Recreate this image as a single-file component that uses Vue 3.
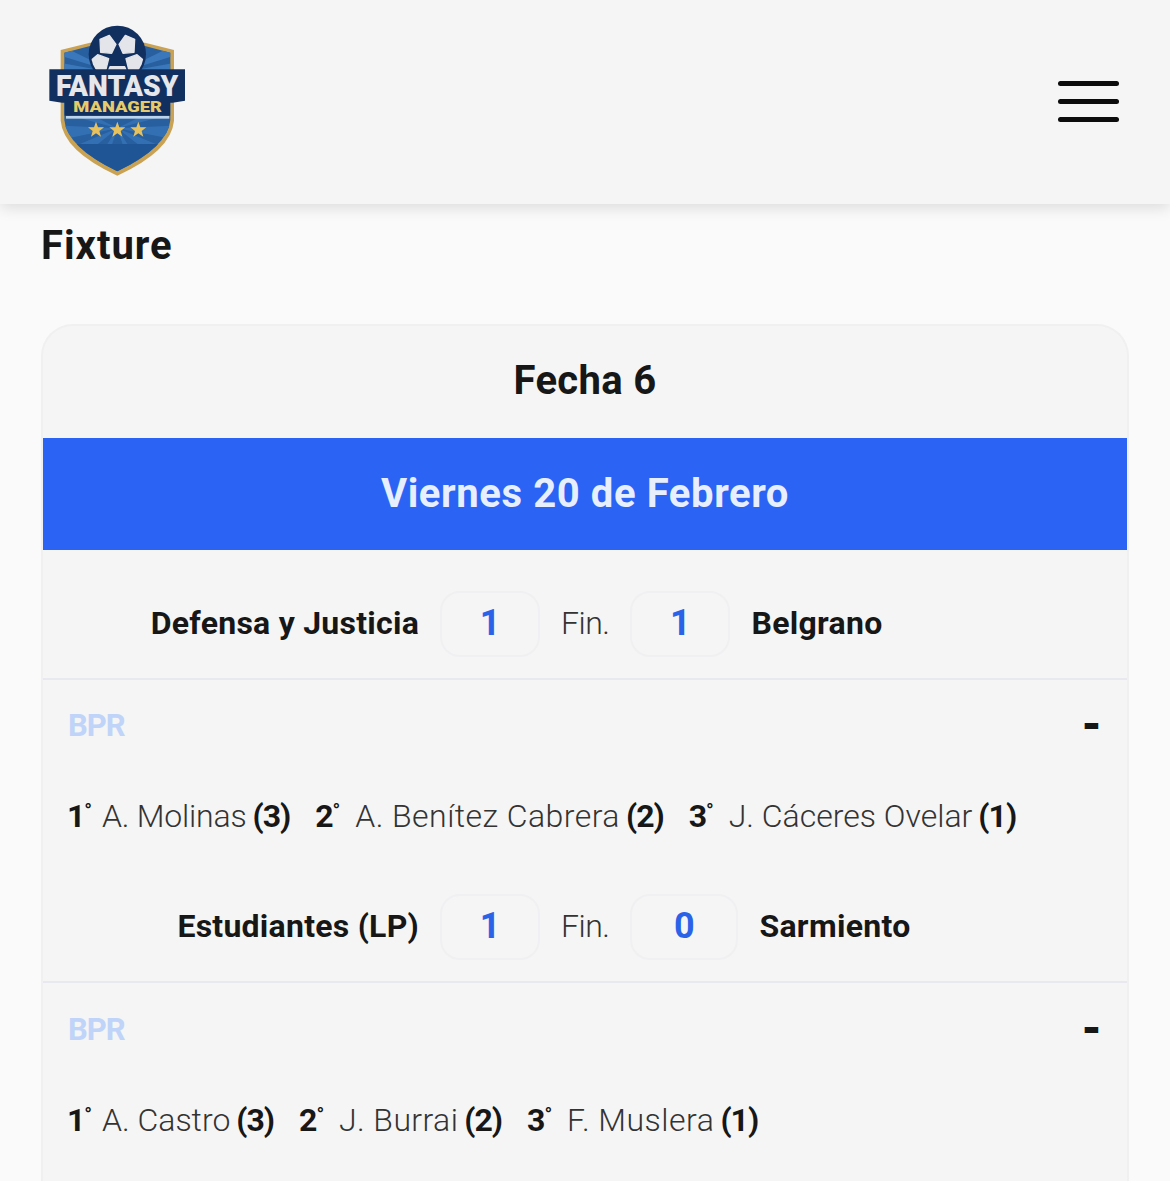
<script setup>
const matches = [
  { home: 'Defensa y Justicia', away: 'Belgrano', hs: 1, as: 1, wide: false,
    podium: [
      { pos: '1', name: 'A. Molinas', pts: 3, track: -0.2 },
      { pos: '2', name: 'A. Benítez Cabrera', pts: 2, track: 0.45 },
      { pos: '3', name: 'J. Cáceres Ovelar', pts: 1, track: 0 },
    ] },
  { home: 'Estudiantes (LP)', away: 'Sarmiento', hs: 1, as: 0, wide: true,
    podium: [
      { pos: '1', name: 'A. Castro', pts: 3, track: 0 },
      { pos: '2', name: 'J. Burrai', pts: 2, track: 0.4 },
      { pos: '3', name: 'F. Muslera', pts: 1, track: 0.5 },
    ] },
]
const rays = [
  'M262 355 L60 250 L60 300 Z', 'M262 355 L60 345 L60 395 Z', 'M262 355 L120 470 L60 440 Z',
  'M262 355 L470 250 L470 300 Z', 'M262 355 L470 345 L470 395 Z', 'M262 355 L410 470 L470 440 Z',
  'M262 355 L215 500 L170 500 Z', 'M262 355 L310 500 L355 500 Z',
]
const topRays = [
  'M262 190 L100 110 L100 140 Z', 'M262 190 L100 160 L100 190 Z',
  'M262 190 L424 110 L424 140 Z', 'M262 190 L424 160 L424 190 Z',
]
</script>

<template>
  <div class="page">
    <header class="header">
      <svg class="logo" viewBox="0 0 540 540" width="180" height="180" aria-label="Fantasy Manager">
        <defs>
          <clipPath id="shieldClip">
            <path d="M103 128 L180 108 L345 108 L421 128 L421 330 Q414 410 262 484 Q110 410 103 330 Z" />
          </clipPath>
          <clipPath id="ballClip"><circle cx="262" cy="133" r="79" /></clipPath>
        </defs>
        <path d="M92 120 L180 98 L345 98 L432 120 L432 332 Q424 422 262 497 Q100 422 92 332 Z" fill="#c9a253" />
        <path d="M103 128 L180 108 L345 108 L421 128 L421 330 Q414 410 262 484 Q110 410 103 330 Z" fill="#285f9f" />
        <g clip-path="url(#shieldClip)">
          <path v-for="d in rays" :key="d" :d="d" fill="#3370b3" />
          <path v-for="d in topRays" :key="d" :d="d" fill="#3a78bb" />
          <rect x="90" y="402" width="350" height="100" fill="#1f5595" />
          <rect x="90" y="268" width="350" height="49" fill="#12305f" />
          <rect x="108" y="318" width="310" height="8" fill="#bcd3ec" />
        </g>
        <circle cx="262" cy="133" r="86" fill="#12305f" />
        <g clip-path="url(#ballClip)" fill="#e3e5ea" stroke="#e3e5ea" stroke-width="4" stroke-linejoin="round">
          <path d="M210 88 L238 76 L258 103 L245 130 L212 127 Z" />
          <path d="M314 88 L286 76 L267 103 L279 130 L312 127 Z" />
          <path d="M203 134 L236 146 L228 178 L194 182 L181 153 Z" />
          <path d="M321 134 L288 146 L296 178 L330 182 L343 153 Z" />
          <path d="M240 170 L284 170 L296 200 L228 200 Z" />
        </g>
        <path d="M58 178 L465 178 L465 272 L428 278 L96 278 L58 272 Z" fill="#12305f" />
        <text class="logo-big" x="78" y="259" textLength="367" lengthAdjust="spacingAndGlyphs">FANTASY</text>
        <text class="logo-small" x="130" y="306" textLength="266" lengthAdjust="spacingAndGlyphs">MANAGER</text>
        <g fill="#e7c15d">
          <polygon v-for="x in [198, 262, 325]" :key="x" :transform="`translate(${x} 360)`"
            points="0,-25 6,-8 24,-8 10,3 15,20 0,10 -15,20 -10,3 -24,-8 -6,-8" />
        </g>
      </svg>
      <div class="burger" aria-label="Menú"><span></span><span></span><span></span></div>
    </header>

    <main class="main">
      <h1 class="title">Fixture</h1>
      <section class="card">
        <h2 class="round">Fecha 6</h2>
        <div class="day">Viernes 20 de Febrero</div>
        <article v-for="m in matches" :key="m.home" class="match">
          <div class="score-row">
            <span class="team home">{{ m.home }}</span>
            <span class="score">{{ m.hs }}</span>
            <span class="status">Fin.</span>
            <span class="score" :class="{ wide: m.wide }">{{ m.as }}</span>
            <span class="team">{{ m.away }}</span>
          </div>
          <div class="bpr">
            <div class="bpr-head"><span class="bpr-label">BPR</span><span class="toggle">-</span></div>
            <div class="podium">
              <span v-for="p in m.podium" :key="p.pos" class="pick">
                <b class="pos" :class="{ first: p.pos === '1' }">{{ p.pos }}<sup>°</sup></b>
                <span class="player" :style="{ letterSpacing: p.track + 'px' }">{{ p.name }}</span>
                <b class="pts">({{ p.pts }})</b>
              </span>
            </div>
          </div>
        </article>
      </section>
    </main>
  </div>
</template>

<style>
html, body { margin: 0; background: #fafafa; }
</style>

<style scoped>
.page {
  height: 1181px;
  overflow: hidden;
  background: #fafafa;
  color: #171717;
  font-family: Roboto, "Liberation Sans", sans-serif;
}
.header {
  height: 204px;
  box-sizing: border-box;
  padding: 10px 51px 0 30px;
  display: flex;
  justify-content: space-between;
  background: #f5f5f5;
  box-shadow: 0 4px 14px rgba(0, 0, 0, 0.12);
  position: relative;
}
.logo { display: block; }
.logo-big { font: 900 90px Roboto, sans-serif; fill: #e6e7ea; }
.logo-small { font: 900 42px Roboto, sans-serif; fill: #e7cb6a; }
.burger {
  width: 61px;
  margin-top: 71px;
  display: flex;
  flex-direction: column;
  gap: 13px;
}
.burger span { height: 5px; border-radius: 3px; background: #0c0c0c; }
.main { padding: 0 41px; }
.title {
  margin: 0 0 53px;
  padding-top: 17px;
  font-size: 40px;
  line-height: 50px;
  font-weight: 700;
  letter-spacing: 1px;
}
.card {
  border: 2px solid #f0f0f0;
  border-bottom: 0;
  border-radius: 32px 32px 0 0;
  background: #f5f5f5;
  padding-bottom: 60px;
}
.round {
  margin: 0;
  height: 112px;
  padding-bottom: 4px;
  box-sizing: border-box;
  display: flex;
  align-items: center;
  justify-content: center;
  font-size: 40px;
  font-weight: 700;
  letter-spacing: 0.3px;
}
.day {
  height: 112px;
  padding-bottom: 2px;
  box-sizing: border-box;
  display: flex;
  align-items: center;
  justify-content: center;
  background: #2b63f5;
  color: #e8effc;
  font-size: 40px;
  font-weight: 700;
  letter-spacing: 0.6px;
}
.score-row {
  display: flex;
  align-items: center;
  gap: 21px;
  padding: 41px 0 21px;
  border-bottom: 2px solid #e8e8f0;
}
.team {
  font-size: 32px;
  font-weight: 700;
  letter-spacing: 0.3px;
  white-space: nowrap;
  padding-bottom: 2px;
}
.home { width: 376px; text-align: right; letter-spacing: 0.25px; }
.score {
  width: 100px;
  height: 66px;
  padding-bottom: 3px;
  box-sizing: border-box;
  display: flex;
  align-items: center;
  justify-content: center;
  border: 2px solid #f0f0f2;
  border-radius: 20px;
  color: #2b63e8;
  font-size: 36px;
  font-weight: 700;
}
.score.wide { width: 108px; }
.status {
  font-size: 32px;
  font-weight: 300;
  letter-spacing: -0.5px;
  color: #333;
  padding-bottom: 2px;
}
.match + .match .bpr { padding-top: 1px; }
.bpr-head {
  display: flex;
  justify-content: space-between;
  align-items: center;
  height: 34px;
  padding: 29px 25px 0 25px;
  line-height: 34px;
}
.bpr-label {
  font-size: 31px;
  font-weight: 700;
  letter-spacing: -1px;
  color: #bfd4f8;
}
.toggle { font-size: 46px; font-weight: 900; position: relative; top: -2px; }
.podium {
  display: flex;
  gap: 25px;
  margin: 53px 0 17px;
  padding-left: 24px;
  height: 40px;
  align-items: center;
  white-space: nowrap;
}
.pick { display: flex; align-items: center; gap: 6px; font-size: 32px; }
.pos { width: 34px; font-weight: 700; }
.pos.first { width: 29px; }
.pos sup { font-size: 20px; line-height: 0; margin-left: -1px; position: relative; top: 3px; }
.player { font-weight: 300; color: #333; }
.pts { font-weight: 700; letter-spacing: -1px; }
</style>
